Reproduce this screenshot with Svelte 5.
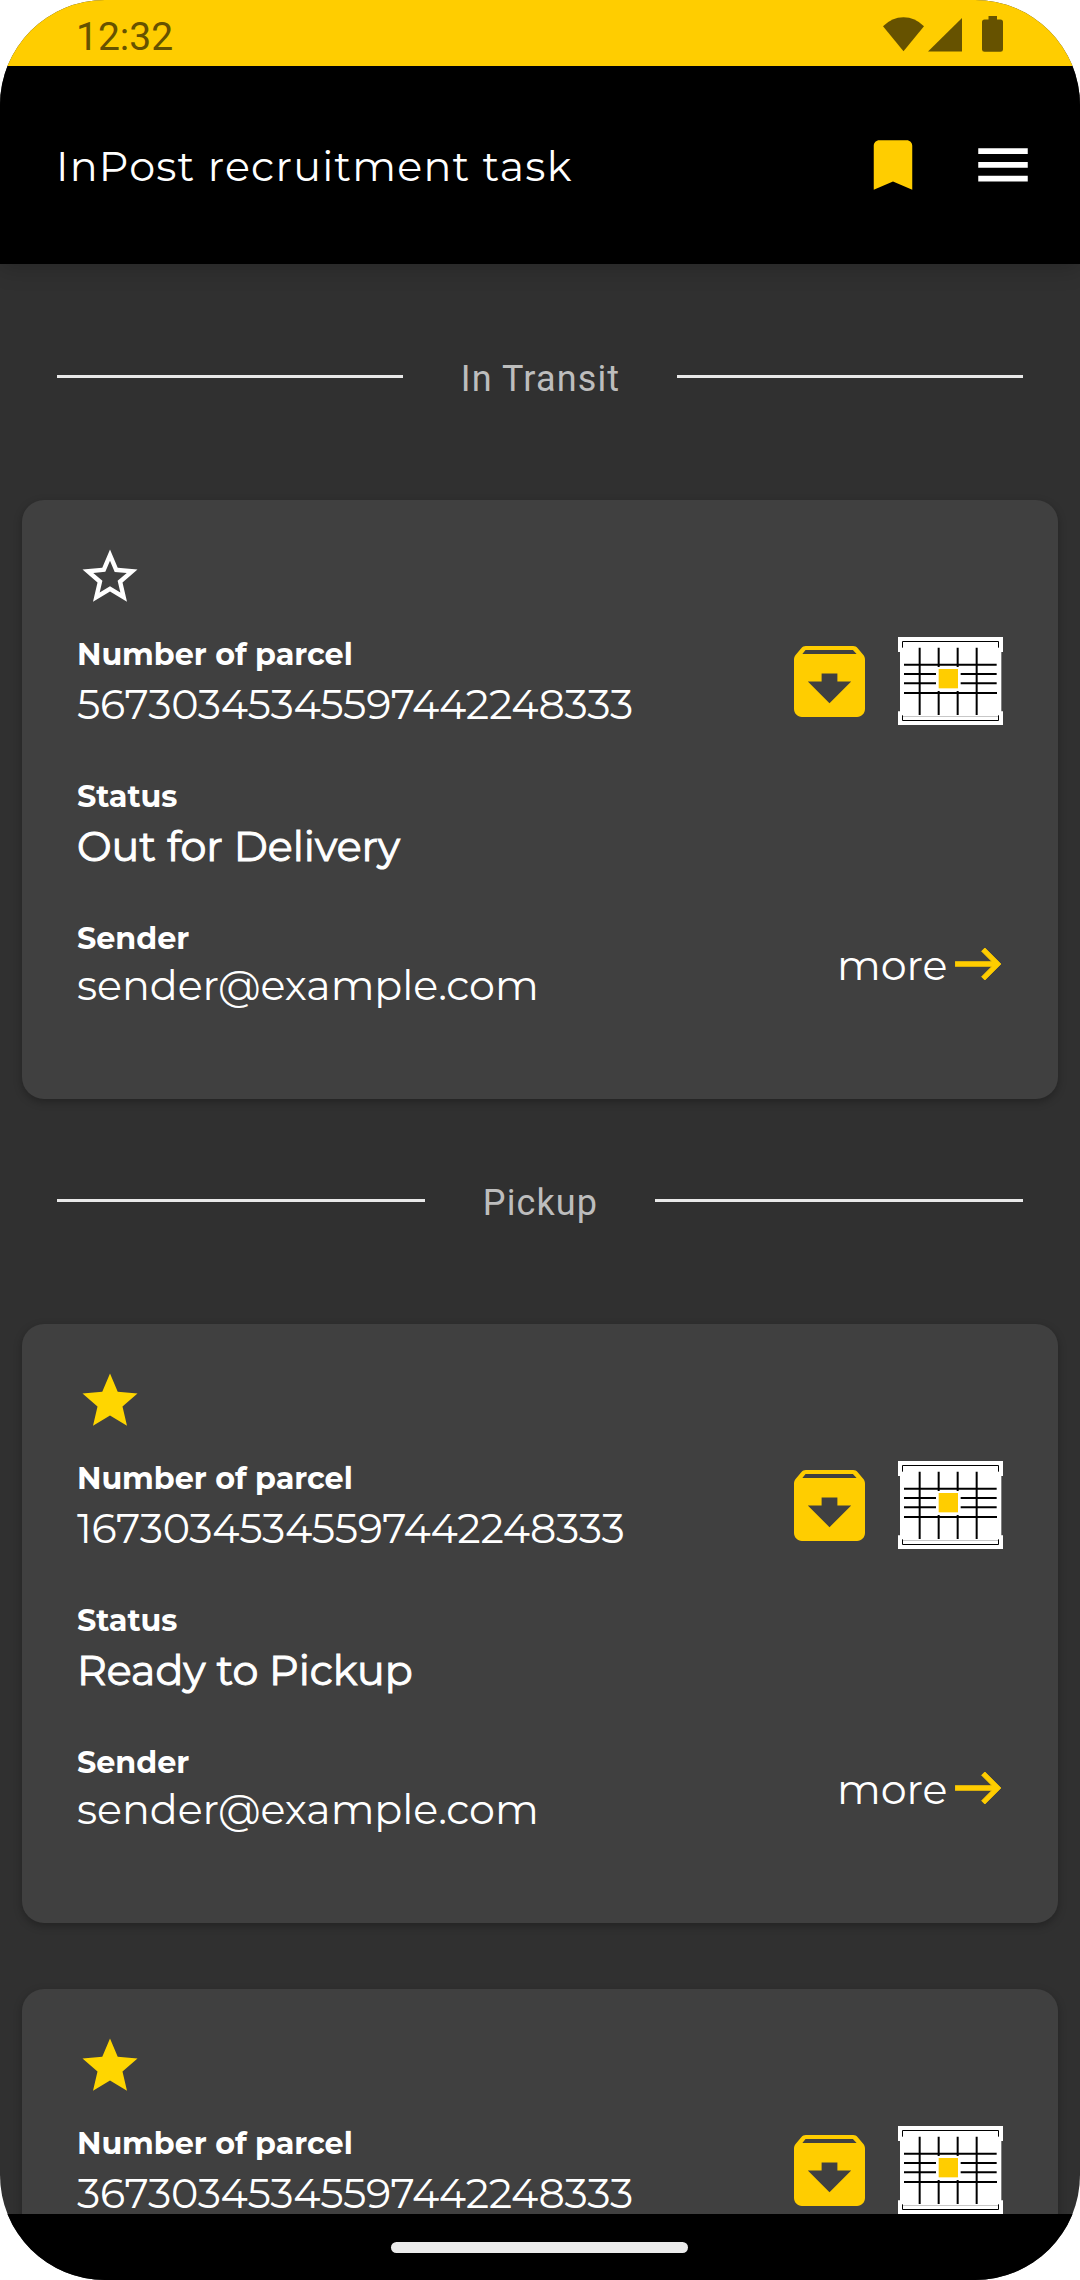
<script>
  const sections = [
    {
      title: 'In Transit',
      parcels: [
        { number: '56730345345597442248333', status: 'Out for Delivery', sender: 'sender@example.com', saved: false }
      ]
    },
    {
      title: 'Pickup',
      parcels: [
        { number: '16730345345597442248333', status: 'Ready to Pickup', sender: 'sender@example.com', saved: true },
        { number: '36730345345597442248333', status: '', sender: '', saved: true }
      ]
    }
  ];
</script>

<div class="phone">
  <div class="statusbar">
    <span class="clock">12:32</span>
    <svg class="system" viewBox="0 0 120 36" aria-hidden="true">
      <path d="M0 10.2Q9 1.2 20.5 1.2T41 10.2L20.5 35.2z" />
      <path d="M45 35.5L79 2v33.500z" />
      <path d="M105.500 0v3.500h-4q-2.500 0-2.500 2.500v27.500q0 2.300 2.500 2.300h16q2.500 0 2.500-2.300V6q0-2.500-2.500-2.500h-3.500V0z" />
    </svg>
  </div>

  <header>
    <h1>InPost recruitment task</h1>
    <svg class="action bookmark" viewBox="0 0 24 24" aria-hidden="true">
      <path d="M17 3H7c-1.100 0-2 .9-2 2v16l7-3 7 3V5c0-1.100-.9-2-2-2z" />
    </svg>
    <svg class="action menu" viewBox="0 0 24 24" aria-hidden="true">
      <path d="M3 18h18v-2.100H3V18zm0-5h18v-2.100H3V13zm0-7.100V8h18V5.900H3z" />
    </svg>
  </header>

  <main>
    {#each sections as section}
      <section>
        <div class="divider">
          <i></i>
          <h2>{section.title}</h2>
          <i></i>
        </div>
        {#each section.parcels as parcel}
          <article>
            <svg class="star" class:saved={parcel.saved} viewBox="0 0 24 24" aria-hidden="true">
              {#if parcel.saved}
                <path d="M12 17.270L18.180 21l-1.640-7.030L22 9.240l-7.190-.61L12 2 9.190 8.630 2 9.240l5.460 4.730L5.820 21z" />
              {:else}
                <path d="M22 9.240l-7.190-.62L12 2 9.190 8.630 2 9.240l5.460 4.730L5.820 21 12 17.270 18.180 21l-1.630-7.030L22 9.240zM12 15.400l-3.760 2.270 1-4.280-3.320-2.880 4.380-.38L12 6.100l1.710 4.040 4.380.38-3.320 2.880 1 4.280L12 15.400z" />
              {/if}
            </svg>
            <div class="row">
              <div class="field">
                <b>Number of parcel</b>
                <span class="number">{parcel.number}</span>
              </div>
              <div class="icons">
                <svg class="archive" viewBox="3 3 18 18" aria-hidden="true">
                  <path d="M20.540 5.230l-1.390-1.680C18.880 3.210 18.470 3 18 3H6c-.47 0-.88.21-1.160.55L3.460 5.230C3.170 5.570 3 6.020 3 6.500V19c0 1.100.9 2 2 2h14c1.100 0 2-.9 2-2V6.500c0-.48-.17-.93-.46-1.270zM12 17.500L6.500 12H10v-2h4v2h3.500L12 17.500zM5.120 5l.81-1h12l.94 1H5.120z" />
                </svg>
                <svg class="locker" viewBox="0 0 315 264" aria-hidden="true">
                  <path fill="#fff" d="M0 0h315v45h-5v178h5v41H0v-41h6V45H0z" />
                  <path stroke="#aaa" stroke-width="2" d="M13 238.500h289" />
                  <path fill="none" stroke="#000" stroke-width="3" d="M13.500 32V13.500h288V32M13.500 235v15.500h288V235" />
                  <path stroke="#000" stroke-width="6" d="M18 83h278M18 111h96M188 111h108M18 139h96M188 139h108M18 168h279M65 32v202M122 32v58M122 162v72M179 32v58M179 162v72M236 32v202" />
                  <path fill="#ffcd00" d="M122 96h58v58h-58z" />
                </svg>
              </div>
            </div>
            {#if parcel.status}
              <div class="field">
                <b>Status</b>
                <span class="status">{parcel.status}</span>
              </div>
              <div class="row">
                <div class="field sender">
                  <b>Sender</b>
                  <span class="email">{parcel.sender}</span>
                </div>
                <div class="more">
                  <span>more</span>
                  <svg viewBox="2 5 20 14" aria-hidden="true">
                    <path d="M15 5l-1.410 1.410L18.170 11H2V13h16.170L13.590 17.590 15 19l7-7z" />
                  </svg>
                </div>
              </div>
            {/if}
          </article>
        {/each}
      </section>
    {/each}
  </main>

  <nav><span class="pill"></span></nav>
</div>

<style>
  :global(body) {
    background: #fff;
  }
  .phone {
    display: flex;
    flex-direction: column;
    width: 1080px;
    height: 2280px;
    box-sizing: border-box;
    overflow: hidden;
    border-radius: 105px;
    background: #303030;
    color: #fff;
    font-family: Montserrat, Inter, sans-serif;
  }
  svg {
    display: block;
    flex: none;
  }
  .statusbar {
    position: relative;
    z-index: 1;
    display: flex;
    flex: none;
    justify-content: space-between;
    height: 66px;
    box-sizing: border-box;
    padding: 16px 77px 0 76px;
    background: #ffcd00;
    color: #665200;
  }
  .clock {
    font: 39px/42px Roboto, sans-serif;
  }
  .system {
    width: 120px;
    height: 36px;
    fill: currentColor;
  }
  header {
    display: flex;
    flex: none;
    align-items: center;
    height: 198px;
    box-sizing: border-box;
    padding: 0 44px 0 56px;
    background: #000;
    box-shadow: 0 4px 22px rgba(0, 0, 0, 0.2);
  }
  h1 {
    flex: 1;
    margin: 1px 0 0;
    font-size: 41.250px;
    font-weight: 400;
    line-height: 50px;
    letter-spacing: 1.240px;
  }
  .action {
    width: 66px;
    height: 66px;
  }
  .bookmark {
    margin-right: 44px;
    fill: #ffcd00;
  }
  .menu {
    fill: #fff;
  }
  main {
    flex: 1;
    min-height: 0;
    overflow: hidden;
    padding: 11px 22px 0;
  }
  .divider {
    display: flex;
    align-items: center;
    height: 43px;
    padding: 80px 35px 102px;
  }
  .divider i {
    flex: 1;
    height: 3px;
    background: #e8e8e8;
  }
  h2 {
    margin: 6px 57px 0 58px;
    color: #bdbdbd;
    font: 400 36px/43px Roboto, sans-serif;
    letter-spacing: 1.120px;
  }
  article {
    height: 599px;
    box-sizing: border-box;
    padding: 44px 55px 0;
    border-radius: 22px;
    background: #404040;
    box-shadow: 0 3px 8px rgba(0, 0, 0, 0.28);
  }
  article + article {
    margin-top: 66px;
  }
  .star {
    width: 66px;
    height: 66px;
    margin-bottom: 22px;
    fill: #fff;
  }
  .star.saved {
    fill: #ffd600;
  }
  .row {
    display: flex;
    justify-content: space-between;
  }
  .field {
    display: flex;
    flex-direction: column;
    height: 142px;
    white-space: nowrap;
  }
  b {
    height: 44px;
    font-size: 30.250px;
    font-weight: 700;
    line-height: 46px;
    letter-spacing: -0.050px;
  }
  .field span {
    font-size: 41.250px;
    font-weight: 400;
    line-height: 57px;
  }
  .field .number {
    letter-spacing: -0.300px;
  }
  .field .status {
    -webkit-text-stroke: 1px currentColor;
  }
  .field .email {
    line-height: 51px;
    letter-spacing: -0.050px;
  }
  .icons {
    display: flex;
    align-items: center;
    gap: 33.500px;
    height: 98px;
  }
  .archive {
    width: 71px;
    height: 71px;
    fill: #ffcd00;
  }
  .locker {
    width: 105px;
    height: 88px;
  }
  .more {
    display: flex;
    align-items: center;
    height: 50px;
    margin-top: 24px;
    padding-right: 2px;
    gap: 7.500px;
    font-size: 41.250px;
    font-weight: 400;
    line-height: 50px;
  }
  .more svg {
    width: 46px;
    height: 32px;
    margin-bottom: 3px;
    fill: #ffcd00;
    stroke: #ffcd00;
    stroke-width: 0.400;
  }
  nav {
    display: flex;
    flex: none;
    align-items: center;
    justify-content: center;
    height: 66px;
    padding-right: 1px;
    background: #000;
  }
  .pill {
    width: 297px;
    height: 11px;
    border-radius: 5.500px;
    background: #ebebeb;
  }
</style>
